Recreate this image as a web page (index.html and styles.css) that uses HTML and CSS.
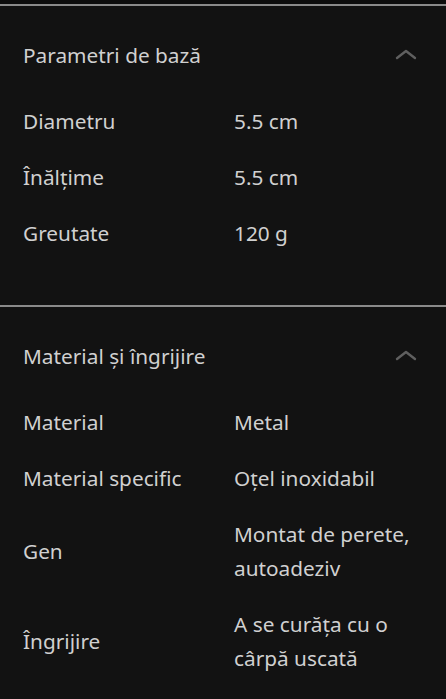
FILE: index.html
```html
<!DOCTYPE html>
<html lang="ro">
<head>
  <meta charset="UTF-8">
  <title>Specificații</title>
  <meta name="viewport" content="width=device-width, initial-scale=1.0">
  <link rel="stylesheet" href="styles.css">
</head>
<body>
  <div class="top-strip"></div>

  <section class="spec-group">
    <div class="spec-header">
      <h2>Parametri de bază</h2>
      <svg class="chevron" width="22" height="12" viewBox="0 0 22 12"><path d="M2 10 L11 3 L20 10" fill="none" stroke="#5f5f5f" stroke-width="2.4" stroke-linecap="round" stroke-linejoin="round"/></svg>
    </div>
    <div class="spec-row"><span class="label">Diametru</span><span class="value">5.5 cm</span></div>
    <div class="spec-row"><span class="label">Înălțime</span><span class="value">5.5 cm</span></div>
    <div class="spec-row"><span class="label">Greutate</span><span class="value">120 g</span></div>
  </section>

  <section class="spec-group">
    <div class="spec-header">
      <h2>Material și îngrijire</h2>
      <svg class="chevron" width="22" height="12" viewBox="0 0 22 12"><path d="M2 10 L11 3 L20 10" fill="none" stroke="#5f5f5f" stroke-width="2.4" stroke-linecap="round" stroke-linejoin="round"/></svg>
    </div>
    <div class="spec-row"><span class="label">Material</span><span class="value">Metal</span></div>
    <div class="spec-row"><span class="label">Material specific</span><span class="value">Oțel inoxidabil</span></div>
    <div class="spec-row"><span class="label">Gen</span><span class="value">Montat de perete, autoadeziv</span></div>
    <div class="spec-row"><span class="label">Îngrijire</span><span class="value">A se curăța cu o cârpă uscată</span></div>
  </section>
</body>
</html>
```

FILE: styles.css
```css
* { box-sizing: border-box; }

body {
  margin: 0;
  background: #121212;
  color: #d0d0d0;
  font-family: 'Noto Sans', sans-serif;
  font-size: 20.8px;
  line-height: 34px;
}

.top-strip {
  height: 4px;
  background: #0d0d0d;
}

.spec-group {
  border-top: 2px solid #8a8a8a;
  padding-bottom: 44px;
}

.spec-header {
  display: flex;
  align-items: center;
  justify-content: space-between;
  padding: 32px 29px 21px 23px;
}

.spec-header h2 {
  margin: 0;
  font-size: 20.8px;
  font-weight: 400;
  line-height: 34px;
}

.chevron {
  display: block;
  margin-top: -2px;
}

.spec-row {
  display: grid;
  grid-template-columns: 211px 1fr;
  align-items: center;
  padding: 11px 23px 11px 23px;
}
```
